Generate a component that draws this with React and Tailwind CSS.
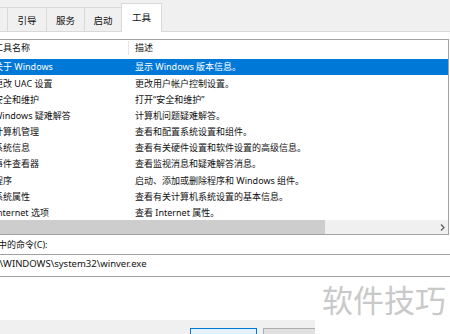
import React from "react";

const tools = [
  ["关于 Windows", "显示 Windows 版本信息。"],
  ["更改 UAC 设置", "更改用户帐户控制设置。"],
  ["安全和维护", "打开“安全和维护”"],
  ["Windows 疑难解答", "计算机问题疑难解答。"],
  ["计算机管理", "查看和配置系统设置和组件。"],
  ["系统信息", "查看有关硬件设置和软件设置的高级信息。"],
  ["事件查看器", "查看监视消息和疑难解答消息。"],
  ["程序", "启动、添加或删除程序和 Windows 组件。"],
  ["系统属性", "查看有关计算机系统设置的基本信息。"],
  ["Internet 选项", "查看 Internet 属性。"],
];

const tabs = ["引导", "服务", "启动"];
const tabWidths = ["w-[39px]", "w-[38px]", "w-[37px]"];

const App = () => {
  return (
    <div className="relative w-[450px] h-[334px] overflow-hidden bg-white text-[9px] text-[#111] font-['Noto_Sans','Noto_Sans_CJK_SC',sans-serif]">
      {/* Tab strip */}
      <div className="flex h-[32px] items-end bg-[#f0f0f0] border-b border-[#d9d9d9]">
        <div className="w-[8px] h-[24px] border-t border-r border-[#d9d9d9]" />
        {tabs.map((t, i) => (
          <div
            key={t}
            className={`${tabWidths[i]} h-[24px] flex items-center justify-center pt-[4px] border-t border-r border-[#d9d9d9] text-[9.5px]`}
          >
            {t}
          </div>
        ))}
        <div className="w-[41px] h-[29px] -ml-px -mb-px flex items-center justify-center bg-white border-t border-l border-r border-[#d9d9d9] text-[9.5px]">
          工具
        </div>
      </div>

      {/* Tab page */}
      <div className="pt-[7px]">
        {/* List view */}
        <div className="-ml-[10px] w-[459px] h-[196px] flex flex-col border border-[#a3a3a3]">
          <div className="flex h-[19px] pb-[3px] items-center">
            <div className="w-[138px] pl-[3px] border-r border-[#e5e5e5] h-[14px] flex items-center">
              工具名称
            </div>
            <div className="pl-[6px]">描述</div>
          </div>
          <div className="h-[161px] overflow-hidden">
            {tools.map(([name, desc], i) => (
              <div
                key={name}
                className={`flex h-[16.2px] items-center whitespace-nowrap ${
                  i === 0 ? "bg-[#0078d7] text-white" : ""
                }`}
              >
                <div className="w-[138px] pl-[3px]">{name}</div>
                <div className="pl-[6px]">{desc}</div>
              </div>
            ))}
          </div>
          {/* Horizontal scrollbar */}
          <div className="flex h-[14px] bg-[#f0f0f0]">
            <div className="w-[334px] bg-[#cdcdcd]" />
            <div className="flex-1 flex items-center justify-end pr-[3px]">
              <svg width="5" height="7" viewBox="0 0 5 7">
                <path d="M1 0.5 L4 3.5 L1 6.5" fill="none" stroke="#606060" strokeWidth="1.3" />
              </svg>
            </div>
          </div>
        </div>

        {/* Selected command */}
        <div className="h-[19px] flex items-center -ml-[11px] whitespace-nowrap">
          选中的命令(C):
        </div>
        <div className="-ml-[10px] w-[470px] h-[23px] flex items-center border-t border-b border-[#a0a0a0] pl-[1px] pb-[2px] text-[9.5px] whitespace-nowrap">
          C:\WINDOWS\system32\winver.exe
        </div>
        <div className="h-[43px]" />

        {/* Dialog footer */}
        <div className="h-[20px] bg-[#f0f0f0] flex items-start pt-[8px]">
          <div className="ml-[190px] w-[67px] h-[20px] border border-[#0078d7] bg-[#e5f1fb]" />
          <div className="ml-[6px] w-[70px] h-[20px] border border-[#adadad] bg-[#e1e1e1]" />
        </div>
      </div>

      {/* Watermark */}
      <div className="absolute left-[315px] top-[277px] right-0 bottom-0 bg-white pl-[7px] pt-[6px]">
        <span className="text-[31px] leading-none text-[#c9c9c9] font-['Noto_Sans_CJK_SC',sans-serif] whitespace-nowrap">
          软件技巧
        </span>
      </div>
    </div>
  );
};

export default App;
